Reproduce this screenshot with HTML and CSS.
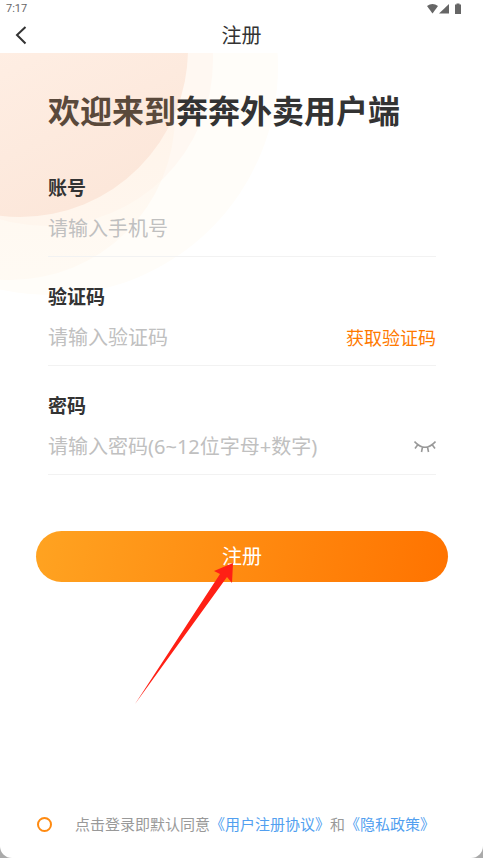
FILE: index.html
```html
<!DOCTYPE html>
<html lang="zh-CN">
<head>
<meta charset="utf-8">
<meta name="viewport" content="width=device-width, initial-scale=1">
<title>注册</title>
<link rel="stylesheet" href="styles.css">
</head>
<body>
<div class="screen">
  <div class="status">
    <span>7:17</span>
    <svg width="35" height="12" viewBox="0 0 35 12" fill="#666" aria-hidden="true">
      <path d="M0 3Q5.500-1 11 3L5.500 10.500Z"/>
      <path d="M22 1V10.500H12Z"/>
      <path d="M28 1.500h1.500V0.500h3V1.500H34v9.500h-6z"/>
    </svg>
  </div>
  <header class="bar">
    <button class="back" type="button" aria-label="返回">
      <svg width="12" height="20" viewBox="0 0 12 20" fill="none" stroke="#333" stroke-width="2"><path d="M10.500 1L2 9L10.500 17.500"/></svg>
    </button>
    <span class="bar-title">注册</span>
  </header>
  <main class="content">
    <svg class="art" width="290" height="260" viewBox="0 53 290 260" aria-hidden="true">
      <defs>
        <linearGradient id="peach" x1="0.300" y1="0.400" x2="0.600" y2="1"><stop offset="0" stop-color="#fff0e6"/><stop offset="1" stop-color="#fce7da"/></linearGradient>
        <linearGradient id="cream" x1="0.600" y1="0.500" x2="0.600" y2="1"><stop offset="0" stop-color="#fff0e2" stop-opacity="0.450"/><stop offset="1" stop-color="#fff3e6" stop-opacity="0.300"/></linearGradient>
      </defs>
      <circle cx="50" cy="67" r="228" fill="#fffdf9"/>
      <circle cx="47" cy="60" r="166" fill="#fff8f2"/>
      <circle cx="10" cy="115" r="165" fill="url(#cream)"/>
      <circle cx="20" cy="49" r="168" fill="url(#peach)"/>
    </svg>
    <h1><span class="tinted">欢迎来到</span>奔奔外卖用户端</h1>
    <form class="form">
      <div class="field">
        <label for="account">账号</label>
        <div class="row"><input id="account" type="tel" placeholder="请输入手机号"></div>
      </div>
      <div class="field">
        <label for="code">验证码</label>
        <div class="row"><input id="code" type="text" placeholder="请输入验证码"><button class="get-code" type="button">获取验证码</button></div>
      </div>
      <div class="field">
        <label for="password">密码</label>
        <div class="row"><input id="password" type="password" placeholder="请输入密码(6~12位字母+数字)">
          <button class="eye" type="button" aria-label="显示密码">
            <svg width="22" height="14" viewBox="0 0 22 14" fill="none" stroke="#999" stroke-width="1.600"><path d="M0.500 1.500Q11 13 21.500 1.500M4 4.500L1 8.500M18 4.500L21 8.500M8.500 7L7.500 12M13.500 7L14.500 12"/></svg>
          </button>
        </div>
      </div>
      <div class="submit-wrap">
        <button class="submit" type="submit">注册</button>
        <svg class="arrow" width="100" height="142" viewBox="0 0 100 142" fill="#ff2015" aria-hidden="true"><path d="M0 141L85 11L79 8L98 0L97 20L92 14Z"/></svg>
      </div>
    </form>
  </main>
  <footer class="agree">
    <input id="agree" type="radio">
    <p><label for="agree">点击登录即默认同意</label><a href="#terms">《用户注册协议》</a>和<a href="#privacy">《隐私政策》</a></p>
  </footer>
</div>
</body>
</html>
```
FILE: styles.css
```css
* { box-sizing: border-box; }

body {
  margin: 0;
  background: #aaa;
  color: #333;
  font-family: "Noto Sans", "Noto Sans CJK SC", sans-serif;
}

button {
  padding: 0;
  border: 0;
  background: none;
  font: inherit;
}

svg { display: block; }

.screen {
  display: flex;
  flex-direction: column;
  min-height: 100vh;
  background: #fff;
  border-radius: 0 0 12px 12px;
}

.status {
  display: flex;
  justify-content: space-between;
  align-items: center;
  height: 18px;
  padding: 0 21px 0 6px;
  color: #666;
  font: 11px/20px Roboto, sans-serif;
}

.bar {
  display: grid;
  grid-template-columns: 1fr auto 1fr;
  align-items: center;
  height: 35px;
  padding: 0 15px;
}

.back { justify-self: start; }

.bar-title { font-size: 20px; line-height: 34px; }

.content {
  position: relative;
  flex: 1;
  padding: 34px 35px 0 36px;
}

.art {
  position: absolute;
  top: 0;
  left: 0;
}

h1 {
  position: relative;
  margin: 0 12px 31px;
  font-size: 32px;
  font-weight: 700;
  line-height: 48px;
}

.tinted { color: #5a493b; }

.form { position: relative; }

.field {
  margin: 0 12px;
  height: 109px;
  padding-top: 8px;
}

.field label {
  display: block;
  font-size: 19px;
  font-weight: 700;
  line-height: 28px;
}

.row {
  display: flex;
  align-items: center;
  height: 55px;
  border-bottom: 1px solid #f2f2f2;
}

.row input {
  flex: 1;
  min-width: 0;
  padding: 0;
  border: 0;
  background: transparent;
  font: 20px/30px "Noto Sans", "Noto Sans CJK SC", sans-serif;
}

.row input::placeholder { color: #c0c0c0; opacity: 1; }

.get-code { color: #ff7a00; font-size: 18px; line-height: 26px; }

.submit-wrap { position: relative; padding-top: 38px; }

.submit {
  display: block;
  width: 100%;
  height: 51px;
  padding-bottom: 2px;
  border-radius: 26px;
  background: linear-gradient(100deg, #ffa321, #ff7300);
  color: #fff;
  font-size: 20px;
}

.arrow {
  position: absolute;
  top: 70px;
  left: 99px;
}

.agree {
  display: flex;
  align-items: center;
  gap: 23px;
  padding: 0 37px 22px;
  color: #999;
  font-size: 15px;
  line-height: 24px;
}

.agree input {
  appearance: none;
  width: 15px;
  height: 15px;
  margin: 0;
  border: 2px solid #ff8a10;
  border-radius: 50%;
}

.agree p { margin: 0; }

.agree a { color: #529ff0; text-decoration: none; }
```
